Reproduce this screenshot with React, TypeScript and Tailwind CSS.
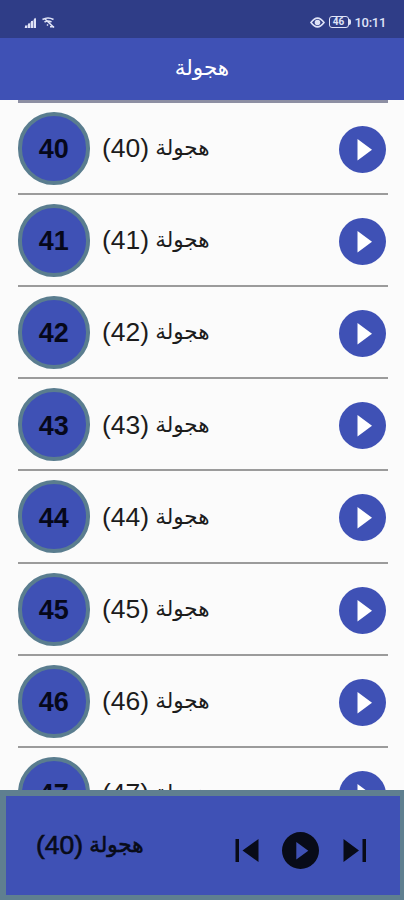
const tracks = [40, 41, 42, 43, 44, 45, 46, 47];

const title = "هجولة";

const StatusBar = () => (
  <div className="flex h-[38px] shrink-0 items-center justify-between bg-[#2f3d87] pl-6 pr-[18px] pt-[6px] text-[#dfe3f7]">
    <div className="flex items-center gap-[5px]">
      <svg className="h-[11px] w-[13px]" viewBox="0 0 13 11" fill="currentColor">
        <path d="M0 11L12 0.5V11z" opacity="0.45" />
        <path d="M1 8.5h2V11H1zM4 6.5h2V11H4zM7 4h2v7H7zM10 1.5h2V11h-2z" />
      </svg>
      <svg className="h-[11px] w-[13px]" viewBox="0 0 13 11" fill="none" stroke="currentColor" strokeWidth="1.6">
        <path d="M0.5 2.5Q6 -0.5 11.5 2.5M2.5 5Q6 3 9.5 5M5 7.5L6 8.5M3 2l9 8.5M8 9.8h4" />
      </svg>
    </div>
    <div className="flex items-center">
      <svg className="h-[11px] w-[15px]" viewBox="0 0 15 11" fill="none" stroke="currentColor" strokeWidth="1.6">
        <path d="M1 5.5Q7.5 -3.2 14 5.5Q7.5 14.2 1 5.5z" />
        <circle cx="7.5" cy="5.5" r="2" fill="currentColor" />
      </svg>
      <div className="ml-[4px] flex h-[12px] w-[20px] items-center justify-center rounded-[3px] border-[1.5px] border-current font-['Roboto',sans-serif] text-[10px] font-bold leading-none">
        46
      </div>
      <div className="h-[6px] w-[2px] rounded-r bg-current" />
      <span className="ml-[4px] font-['Roboto',sans-serif] text-[13px] font-medium leading-none tracking-[-0.3px]">10:11</span>
    </div>
  </div>
);

const TrackRow = ({ number }: { number: number }) => (
  <div className="flex h-[92.2px] shrink-0 items-center border-b-2 border-[#9b9b9b]">
    <div className="mt-[1px] flex h-[73px] w-[72.5px] items-center justify-center rounded-full border-4 border-[#5a7d8f] bg-[#3f51b5] pt-[2px] text-[27px] font-bold text-[#06081a]">
      {number}
    </div>
    <div dir="rtl" className="ml-[12px] mt-px whitespace-nowrap text-[26.5px] leading-none text-[#1c1c1c]">
      <span className="inline-block -translate-y-[2px] text-[21.5px] leading-none">{title}</span>
      <span className="mr-[6px]">({number})</span>
    </div>
    <svg className="ml-auto mr-[2px] mt-[3px] h-[47px] w-[47px]" viewBox="0 0 47 47">
      <circle cx="23.5" cy="23.5" r="23.5" fill="#3f51b5" />
      <path d="M18.5 13v21.5l14.5-10.7z" fill="#fff" />
    </svg>
  </div>
);

const PlayerBar = () => (
  <div className="flex h-[110px] shrink-0 items-center border-b-[5px] border-l-[6px] border-r-4 border-t-[6px] border-[#5f7f90] bg-[#3f51b5] pl-[30px] text-[#080b18]">
    <div dir="rtl" className="whitespace-nowrap text-[26.5px] leading-none [-webkit-text-stroke:0.6px_#080b18]">
      <span className="inline-block -translate-y-[2px] text-[21.5px] leading-none">{title}</span>
      <span className="mr-[6px]">(40)</span>
    </div>
    <div className="ml-auto mr-[33px] mt-[9px] flex items-center">
      <svg className="h-[23px] w-[24px]" viewBox="0 0 24 23" fill="currentColor">
        <path d="M0.5 0h3.5v23H0.5zM23.5 0v23L7.5 11.5z" />
      </svg>
      <svg className="ml-[23px] mr-[24px] h-[37px] w-[37px]" viewBox="0 0 37 37" fill="currentColor">
        <path fillRule="evenodd" d="M18.5 0a18.5 18.5 0 1 1 0 37a18.5 18.5 0 1 1 0-37zM14.3 10v17.5l12-8.7z" />
      </svg>
      <svg className="h-[23px] w-[24px]" viewBox="0 0 24 23" fill="currentColor">
        <path d="M0.5 0v23l15.5-11.5zM19.5 0h3.5v23h-3.5z" />
      </svg>
    </div>
  </div>
);

const App = () => {
  return (
    <div className="flex h-[900px] w-[404px] flex-col overflow-hidden bg-[#fbfbfb] font-['Liberation_Sans','DejaVu_Sans',sans-serif]">
      <StatusBar />
      <header className="flex h-[62px] shrink-0 items-center justify-center bg-[#3f51b5] pb-[2px] text-[21.5px] text-white">
        {title}
      </header>
      <main className="min-h-0 flex-1 overflow-hidden pl-[17.5px] pr-4">
        <div className="h-[2.6px] bg-[#8d8fa3]" />
        {tracks.map((number) => (
          <TrackRow key={number} number={number} />
        ))}
      </main>
      <PlayerBar />
    </div>
  );
};

export default App;
